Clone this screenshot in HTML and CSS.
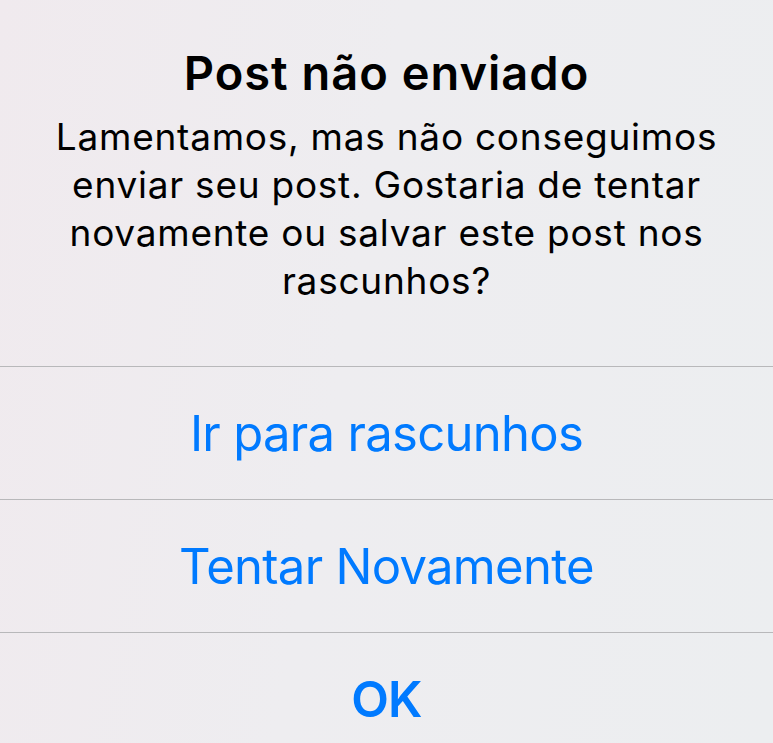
FILE: index.html
```html
<!DOCTYPE html>
<html lang="pt-BR">
<head>
    <meta charset="UTF-8">
    <meta name="viewport" content="width=device-width, initial-scale=1.0">
    <title>Post não enviado</title>
    <link rel="stylesheet" href="styles.css">
</head>
<body>
    <div class="alert">
        <div class="alert-header">
            <h1 class="alert-title">Post não enviado</h1>
            <p class="alert-message">Lamentamos, mas não conseguimos enviar seu post. Gostaria de tentar novamente ou salvar este post nos rascunhos?</p>
        </div>
        <div class="alert-actions">
            <button class="action">Ir para rascunhos</button>
            <button class="action">Tentar Novamente</button>
            <button class="action action-bold">OK</button>
        </div>
    </div>
</body>
</html>
```

FILE: styles.css
```css
:root {
    --ios-blue: #007aff;
    --separator: #b8b8ba;
}

html, body {
    height: 100%;
}

body {
    margin: 0;
    overflow: hidden;
    background: linear-gradient(100deg, #f0eaee 0%, #eeedf0 45%, #eceef0 100%);
    font-family: Inter, "Noto Sans", sans-serif;
    color: #000;
}

.alert {
    display: flex;
    flex-direction: column;
}

.alert-header {
    padding: 45px 30px 61px;
    text-align: center;
}

.alert-title {
    margin: 0;
    font-size: 47px;
    font-weight: 600;
    line-height: 56px;
    letter-spacing: 1px;
}

.alert-message {
    margin: 12px 0 0;
    font-size: 37px;
    font-weight: 400;
    line-height: 48px;
    letter-spacing: 0.75px;
}

.alert-actions {
    display: flex;
    flex-direction: column;
}

.action {
    height: 133px;
    border: 0;
    border-top: 1px solid var(--separator);
    background: transparent;
    color: var(--ios-blue);
    font-family: inherit;
    font-size: 49px;
    font-weight: 400;
    letter-spacing: -0.7px;
    padding: 0;
    cursor: pointer;
}

.action-bold {
    font-weight: 600;
}
```
